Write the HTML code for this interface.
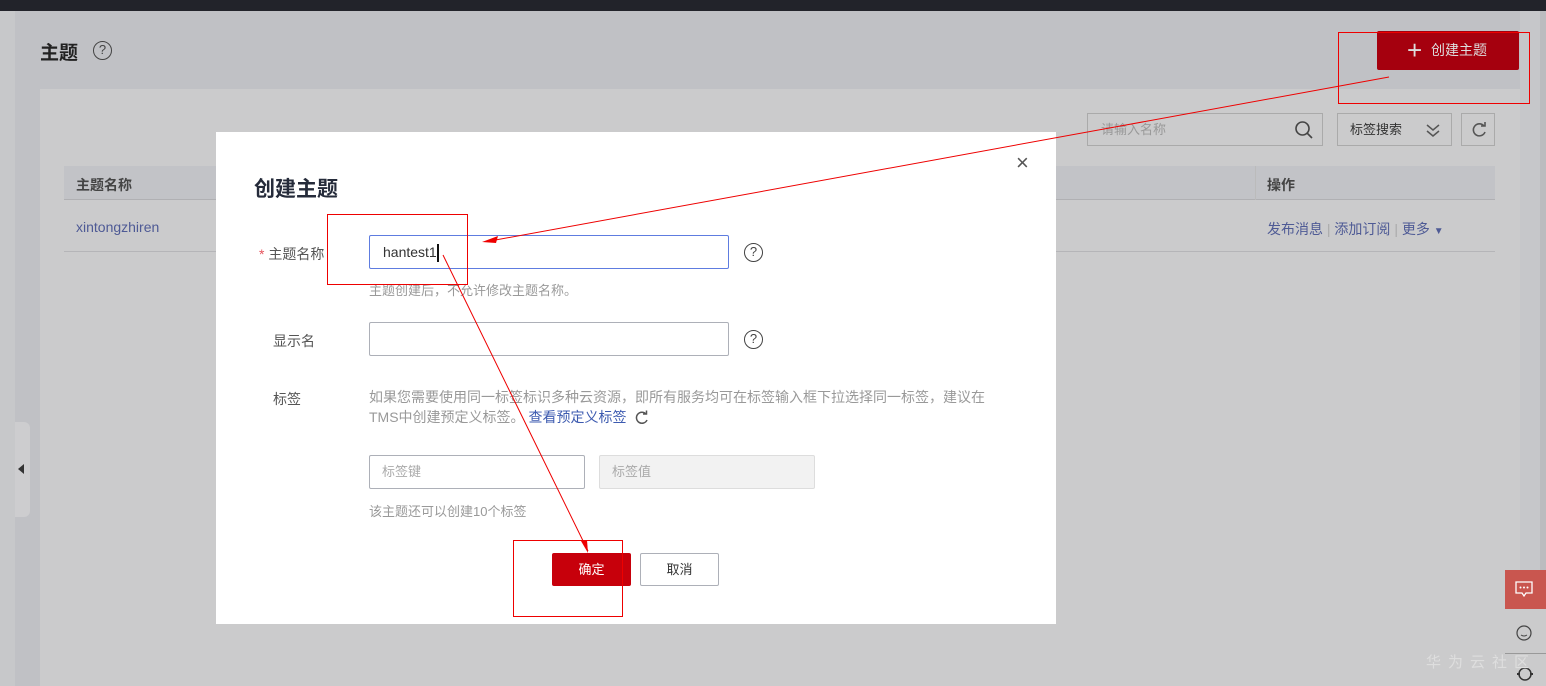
<!DOCTYPE html>
<html><head><meta charset="utf-8"><style>
*{margin:0;padding:0;box-sizing:border-box}
body{width:1546px;height:686px;overflow:hidden;position:relative;background:#c0c1c5;font-family:"Liberation Sans","Noto Sans CJK SC",sans-serif;color:#333}
.a{position:absolute}
.t{font-size:14px}
</style></head><body>
<div class="a" style="left:0;top:0;width:1546px;height:11px;background:#22232a"></div>
<div class="a" style="left:0;top:11px;width:15px;height:675px;background:#c7c8ca"></div>
<div class="a" style="left:1520px;top:11px;width:26px;height:675px;background:#c6c7ca"></div>
<div class="a" style="left:1540px;top:11px;width:6px;height:675px;background:#bbbcbf"></div>
<div class="a" style="left:40px;top:38px;font-size:19px;font-weight:bold;color:#222">主题</div>
<div class="a" style="left:93px;top:41px;width:19px;height:19px;border:1.5px solid #444;border-radius:50%;font-size:13px;text-align:center;line-height:16px;color:#444">?</div>
<div class="a" style="left:1377px;top:31px;width:142px;height:39px;background:#a5000e;border-radius:2px;color:#ddd;font-size:14px;line-height:39px;padding-left:30px"><span style="position:absolute;left:30px;top:0;font-size:26px;font-weight:200">+</span><span style="margin-left:24px">创建主题</span></div>
<div class="a" style="left:40px;top:89px;width:1480px;height:597px;background:#cbcbcc"></div>
<div class="a" style="left:1087px;top:113px;width:236px;height:33px;border:1px solid #aaa;color:#999;font-size:13px;line-height:31px;padding-left:13px">请输入名称
<svg class="a" style="right:8px;top:6px" width="20" height="20"><circle cx="8.5" cy="8.5" r="6.5" fill="none" stroke="#444" stroke-width="1.6"/><path d="M13 13l5 5" stroke="#444" stroke-width="1.6"/></svg></div>
<div class="a" style="left:1337px;top:113px;width:115px;height:33px;border:1px solid #aaa;font-size:13px;line-height:31px;padding-left:12px;color:#333">标签搜索
<svg class="a" style="right:10px;top:8px" width="16" height="16"><path d="M2 3l6 5 6-5M2 9l6 5 6-5" fill="none" stroke="#555" stroke-width="1.5"/></svg></div>
<div class="a" style="left:1461px;top:113px;width:34px;height:33px;border:1px solid #aaa"><svg class="a" style="left:8px;top:7px" width="18" height="18"><path d="M14 5A6 6 0 1 0 15 11" fill="none" stroke="#555" stroke-width="1.6"/><path d="M11 5h4V1" fill="none" stroke="#555" stroke-width="1.6"/></svg></div>
<div class="a" style="left:64px;top:166px;width:1431px;height:34px;background:#c2c3c7;border-bottom:1px solid #b0b0b3"></div>
<div class="a t" style="left:76px;top:175px;font-weight:bold;color:#444">主题名称</div>
<div class="a" style="left:1255px;top:166px;width:1px;height:34px;background:#bbb"></div>
<div class="a t" style="left:1267px;top:175px;font-weight:bold;color:#444">操作</div>
<div class="a t" style="left:76px;top:219px;color:#4e5a95">xintongzhiren</div>
<div class="a t" style="left:1267px;top:219px;color:#4e5a95">发布消息 <span style="color:#aaa">|</span> 添加订阅 <span style="color:#aaa">|</span> 更多 <span style="font-size:10px">▼</span></div>
<div class="a" style="left:64px;top:251px;width:1431px;height:1px;background:#b5b5b8"></div>
<div class="a" style="left:15px;top:422px;width:15px;height:95px;background:#cdcdcf;border-radius:0 6px 6px 0"></div>
<div class="a" style="left:18px;top:464px;width:0;height:0;border-top:5px solid transparent;border-bottom:5px solid transparent;border-right:6px solid #333"></div>

<div class="a" style="left:216px;top:132px;width:840px;height:492px;background:#fff"></div>
<div class="a" style="left:1016px;top:150px;font-size:22px;color:#555;font-weight:200">×</div>
<div class="a" style="left:254px;top:173px;font-size:21px;font-weight:bold;color:#252b3a">创建主题</div>
<div class="a t" style="left:259px;top:244px;color:#555"><span style="color:#e5535c">*</span> 主题名称</div>
<div class="a" style="left:369px;top:235px;width:360px;height:34px;border:1px solid #5e7ce0;border-radius:2px;font-size:14px;line-height:32px;padding-left:13px;color:#333">hantest1<span style="display:inline-block;width:2px;height:18px;background:#111;vertical-align:middle"></span></div>
<div class="a" style="left:744px;top:243px;width:19px;height:19px;border:1.5px solid #444;border-radius:50%;font-size:13px;text-align:center;line-height:16px;color:#444">?</div>
<div class="a" style="left:369px;top:280px;font-size:13px;color:#999">主题创建后，不允许修改主题名称。</div>
<div class="a t" style="left:273px;top:331px;color:#555">显示名</div>
<div class="a" style="left:369px;top:322px;width:360px;height:34px;border:1px solid #adb0b8;border-radius:2px"></div>
<div class="a" style="left:744px;top:330px;width:19px;height:19px;border:1.5px solid #444;border-radius:50%;font-size:13px;text-align:center;line-height:16px;color:#444">?</div>
<div class="a t" style="left:273px;top:389px;color:#555">标签</div>
<div class="a" style="left:369px;top:387px;white-space:nowrap;font-size:14px;line-height:20px;color:#999">如果您需要使用同一标签标识多种云资源，即所有服务均可在标签输入框下拉选择同一标签，建议在<br>TMS中创建预定义标签。 <span style="color:#3d5bb0">查看预定义标签</span>
<svg style="vertical-align:middle;margin-left:4px" width="16" height="16"><path d="M12 4A5.5 5.5 0 1 0 13 10" fill="none" stroke="#555" stroke-width="1.5"/><path d="M9 4h3.5V0.5" fill="none" stroke="#555" stroke-width="1.5"/></svg></div>
<div class="a" style="left:369px;top:455px;width:216px;height:34px;border:1px solid #adb0b8;border-radius:2px;font-size:13px;color:#aaa;line-height:32px;padding-left:12px">标签键</div>
<div class="a" style="left:599px;top:455px;width:216px;height:34px;border:1px solid #ddd;background:#f2f2f2;border-radius:2px;font-size:13px;color:#aaa;line-height:32px;padding-left:12px">标签值</div>
<div class="a" style="left:369px;top:501px;font-size:13px;color:#999">该主题还可以创建10个标签</div>
<div class="a" style="left:552px;top:553px;width:79px;height:33px;background:#c7000b;color:#fff;font-size:13px;text-align:center;line-height:33px;border-radius:2px">确定</div>
<div class="a" style="left:640px;top:553px;width:79px;height:33px;border:1px solid #adb0b8;color:#333;font-size:13px;text-align:center;line-height:31px;border-radius:2px">取消</div>

<div class="a" style="left:1505px;top:570px;width:41px;height:39px;background:#c9564f"></div>
<svg class="a" style="left:1514px;top:579px" width="20" height="20"><path d="M2 3h16v11h-6l-2 3-2-3H2z" fill="none" stroke="#fff" stroke-width="1.3"/><circle cx="6.5" cy="8.5" r="1" fill="#fff"/><circle cx="10" cy="8.5" r="1" fill="#fff"/><circle cx="13.5" cy="8.5" r="1" fill="#fff"/></svg>
<div class="a" style="left:1505px;top:609px;width:41px;height:77px;background:#cbcbcc"></div>
<svg class="a" style="left:1514px;top:623px" width="20" height="20"><circle cx="10" cy="10" r="7" fill="none" stroke="#444" stroke-width="1.2"/><path d="M7 12q3 2 6 0" fill="none" stroke="#444"/></svg>
<div class="a" style="left:1505px;top:653px;width:41px;height:1px;background:#999"></div>
<svg class="a" style="left:1514px;top:664px" width="22" height="20"><circle cx="11" cy="10" r="6" fill="none" stroke="#333" stroke-width="1.5"/><path d="M3 10h3M16 10h3" stroke="#333" stroke-width="2"/></svg>
<div class="a" style="left:1426px;top:651px;font-size:15px;color:#dedede;letter-spacing:7px">华为云社区</div>

<svg class="a" style="left:0;top:0" width="1546" height="686">
<g fill="none" stroke="#e00" stroke-width="1">
<rect x="1338.5" y="32.5" width="191" height="71"/>
<rect x="327.5" y="214.5" width="140" height="70"/>
<rect x="513.5" y="540.5" width="109" height="76"/>
<path d="M1389 77L490 241M443 255L588 551"/>
</g>
<path d="M482 242l16-6-2 7z" fill="#e00"/>
<path d="M588 553l-7-12 6-1z" fill="#e00"/>
</svg>
</body></html>
